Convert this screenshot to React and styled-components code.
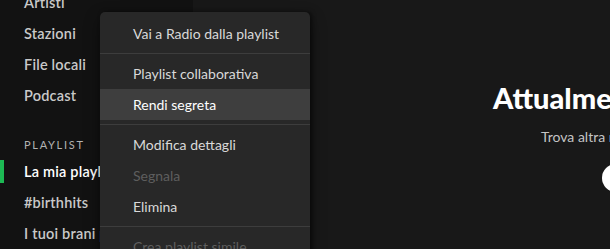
import React from "react";
import styled, { createGlobalStyle } from "styled-components";

const GlobalStyle = createGlobalStyle`
  html, body {
    margin: 0;
    padding: 0;
    background: #181818;
    overflow: hidden;
  }
  body {
    font-family: "Lato", "Open Sans", sans-serif;
  }
`;

const Page = styled.div`
  display: flex;
  width: 610px;
  height: 249px;
  overflow: hidden;
  position: relative;
`;

const Sidebar = styled.nav`
  width: 193px;
  flex-shrink: 0;
  background: #121212;
  display: flex;
  flex-direction: column;
  margin-top: -13px;
`;

const NavItem = styled.div`
  position: relative;
  height: 31px;
  flex-shrink: 0;
  display: flex;
  align-items: center;
  padding-left: 24px;
  font-size: 14.5px;
  font-weight: 600;
  letter-spacing: 0.2px;
  white-space: nowrap;
  color: ${(p) => (p.active ? "#ffffff" : "#c9c9c9")};

  ${(p) =>
    p.active &&
    `
    &::before {
      content: "";
      position: absolute;
      left: 0;
      top: 4px;
      bottom: 4px;
      width: 4px;
      background: #1db954;
    }
  `}
`;

const SectionTitle = styled.div`
  margin-top: 21px;
  height: 24px;
  flex-shrink: 0;
  display: flex;
  align-items: center;
  padding-left: 24px;
  font-size: 11px;
  letter-spacing: 1.7px;
  color: #b3b3b3;
  font-weight: 400;
`;

const Main = styled.main`
  flex: 1;
  background: #181818;
  display: flex;
  flex-direction: column;
  padding-top: 80px;
  overflow: hidden;
`;

const Heading = styled.h1`
  margin: 0 0 0 300px;
  font-size: 29px;
  font-weight: 900;
  color: #ffffff;
  white-space: nowrap;
  letter-spacing: 0;
`;

const Sub = styled.p`
  margin: 13px 0 0 348px;
  font-size: 14px;
  color: #c4c4c4;
  white-space: nowrap;
`;

const PillButton = styled.button`
  margin: 19px 0 0 409px;
  align-self: flex-start;
  height: 28px;
  padding: 0 32px;
  border: none;
  border-radius: 14px;
  background: #ffffff;
  color: #181818;
  font-family: inherit;
  font-weight: 700;
  font-size: 12px;
  letter-spacing: 1.5px;
  white-space: nowrap;
`;

const Menu = styled.div`
  position: absolute;
  left: 100px;
  top: 12px;
  width: 210px;
  height: 260px;
  background: #282828;
  border-radius: 5px;
  padding-top: 6px;
  box-sizing: border-box;
  box-shadow: 2px 0 4px rgba(0, 0, 0, 0.5), 0 6px 16px rgba(0, 0, 0, 0.4);
`;

const MenuItem = styled.div`
  height: 31px;
  display: flex;
  align-items: center;
  padding-left: 33px;
  font-size: 14px;
  font-weight: 400;
  white-space: nowrap;
  background: ${(p) => (p.hover ? "#3e3e3e" : "transparent")};
  color: ${(p) =>
    p.disabled ? "#5e5e5e" : p.hover ? "#ffffff" : "#d9d9d9"};
`;

const Separator = styled.div`
  height: 1px;
  margin: 4px 0 4px;
  background: #3d3d3d;
`;

export default function App() {
  return (
    <>
      <GlobalStyle />
      <Page>
        <Sidebar>
          <NavItem>Artisti</NavItem>
          <NavItem>Stazioni</NavItem>
          <NavItem>File locali</NavItem>
          <NavItem>Podcast</NavItem>
          <SectionTitle>PLAYLIST</SectionTitle>
          <NavItem active>La mia playlist</NavItem>
          <NavItem>#birthhits</NavItem>
          <NavItem>I tuoi brani preferiti</NavItem>
        </Sidebar>
        <Main>
          <Heading>Attualmente non ci sono brani</Heading>
          <Sub>Trova altra musica che ti piace</Sub>
          <PillButton>SFOGLIA</PillButton>
        </Main>
        <Menu>
          <MenuItem>Vai a Radio dalla playlist</MenuItem>
          <Separator />
          <MenuItem>Playlist collaborativa</MenuItem>
          <MenuItem hover>Rendi segreta</MenuItem>
          <Separator />
          <MenuItem>Modifica dettagli</MenuItem>
          <MenuItem disabled>Segnala</MenuItem>
          <MenuItem>Elimina</MenuItem>
          <Separator />
          <MenuItem disabled>Crea playlist simile</MenuItem>
        </Menu>
      </Page>
    </>
  );
}
